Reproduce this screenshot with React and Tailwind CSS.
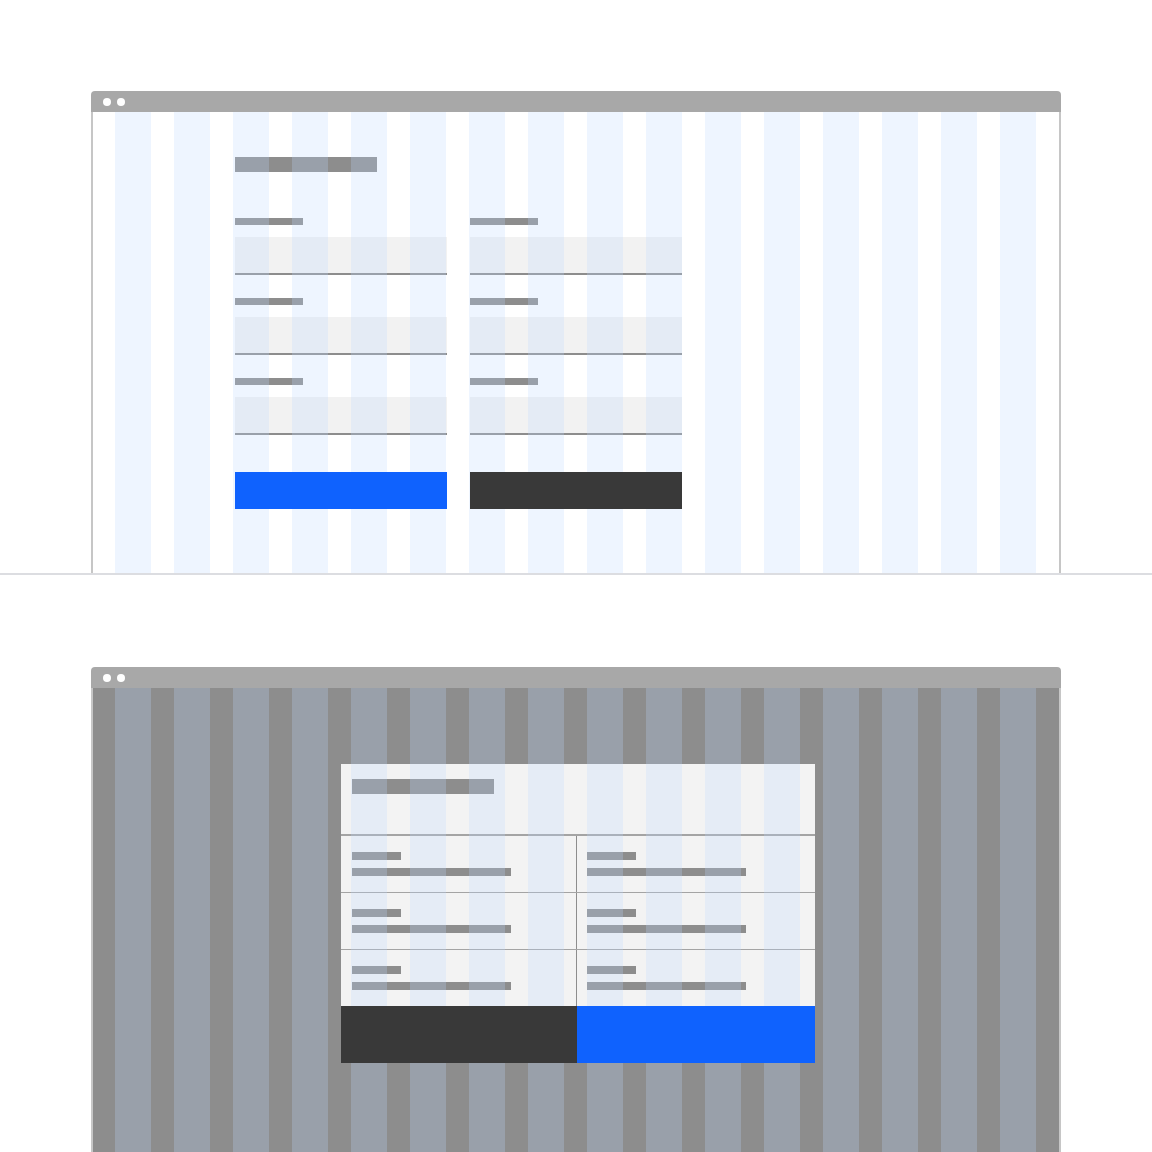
import React from "react";

// Translucent 16-column layout grid drawn over a window body
function ColumnOverlay() {
  return (
    <div className="pointer-events-none absolute inset-0 grid grid-cols-[repeat(16,minmax(0,1fr))] gap-x-[23px] pl-[22px] pr-[23px]">
      {Array.from({ length: 16 }).map((_, i) => (
        <div key={i} className="bg-[rgba(190,217,255,0.26)]" />
      ))}
    </div>
  );
}

function TitleBar() {
  return (
    <div className="flex h-[21px] shrink-0 items-center gap-[6px] rounded-t-[4px] bg-[#a8a8a8] pl-[12px]">
      <span className="h-2 w-2 rounded-full bg-white" />
      <span className="h-2 w-2 rounded-full bg-white" />
    </div>
  );
}

function Field() {
  return (
    <div className="flex flex-col">
      <div className="h-[7px] w-[68px] bg-[#8d8d8d]" />
      <div className="mt-[12px] h-[38px] border-b-2 border-[#8d8d8d] bg-[#f2f2f2]" />
    </div>
  );
}

function FormColumn({ buttonClass }) {
  return (
    <div className="flex flex-col">
      <div className="flex flex-col gap-[23px]">
        <Field />
        <Field />
        <Field />
      </div>
      <div className={`relative z-10 mt-[37px] h-[37px] ${buttonClass}`} />
    </div>
  );
}

function ModalCell({ first }) {
  return (
    <div
      className={
        first
          ? "w-[236px] border-r border-[#8d8d8d] pl-[11px] pt-[16px]"
          : "flex-1 pl-[10px] pt-[16px]"
      }
    >
      <div className="h-[8px] w-[49px] bg-[#8d8d8d]" />
      <div className="mt-[8px] h-[8px] w-[159px] bg-[#8d8d8d]" />
    </div>
  );
}

function ModalRow({ last }) {
  return (
    <div className={`flex h-[57px] ${last ? "" : "border-b border-[#a4a4a4]"}`}>
      <ModalCell first />
      <ModalCell />
    </div>
  );
}

export default function App() {
  return (
    <div className="h-[1152px] w-[1152px] overflow-hidden bg-white">
      {/* Form layout on the light grid */}
      <section className="flex h-[575px] flex-col border-b-2 border-[#dcdde1] px-[91px] pt-[91px]">
        <div className="flex flex-1 flex-col">
          <TitleBar />
          <div className="relative flex-1 border-x-2 border-[#c6c6c6] bg-white">
            <div className="pl-[142px] pt-[45px]">
              <div className="h-[15px] w-[142px] bg-[#8d8d8d]" />
              <div className="mt-[46px] grid grid-cols-[212px_212px] gap-x-[23px]">
                <FormColumn buttonClass="bg-[#0f62fe]" />
                <FormColumn buttonClass="bg-[#393939]" />
              </div>
            </div>
            <ColumnOverlay />
          </div>
        </div>
      </section>

      {/* Modal dialog on the dark grid */}
      <section className="flex h-[577px] flex-col px-[91px] pt-[92px]">
        <div className="flex flex-1 flex-col">
          <TitleBar />
          <div className="relative flex-1 border-x-2 border-[#c6c6c6] bg-[#8d8d8d]">
            <div className="pl-[248px] pt-[76px]">
              <div className="relative w-[474px] bg-[#f3f3f3]">
                <div className="h-[72px] border-b-2 border-[#a4a4a4] pl-[11px] pt-[15px]">
                  <div className="h-[15px] w-[142px] bg-[#8d8d8d]" />
                </div>
                <ModalRow />
                <ModalRow />
                <div className="flex h-[56px]">
                  <ModalCell first />
                  <ModalCell />
                </div>
                <div className="relative z-10 flex h-[57px]">
                  <div className="w-[236px] bg-[#393939]" />
                  <div className="flex-1 bg-[#0f62fe]" />
                </div>
              </div>
            </div>
            <ColumnOverlay />
          </div>
        </div>
      </section>
    </div>
  );
}
